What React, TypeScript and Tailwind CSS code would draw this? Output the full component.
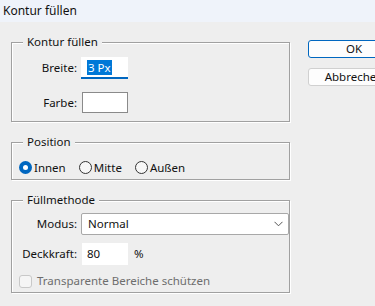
import React from 'react';

const ChevronDown = () => (
  <svg width="9" height="6" viewBox="0 0 9 6" fill="none" stroke="#555" strokeWidth="1">
    <path d="M0.5 0.8 L4.5 4.8 L8.5 0.8" />
  </svg>
);

const Radio = ({ checked, label }: { checked?: boolean; label: string }) => (
  <div className="flex items-center gap-[2px]">
    {checked ? (
      <span className="w-[13px] h-[13px] rounded-full bg-[#0067c0] flex items-center justify-center">
        <span className="w-[5px] h-[5px] rounded-full bg-white" />
      </span>
    ) : (
      <span className="w-[13px] h-[13px] rounded-full border border-[#333] bg-[#f7f7f7]" />
    )}
    <span>{label}</span>
  </div>
);

const Group = ({
  title,
  className,
  children,
}: {
  title: string;
  className: string;
  children?: React.ReactNode;
}) => (
  <div
    className={`border border-[#a0a0a0] shadow-[1px_1px_0_#fff,inset_1px_1px_0_#fff] ${className}`}
  >
    <div className="-mt-[9px] ml-[11px] w-fit px-[4px] bg-[#eeeeee] leading-[16px]">{title}</div>
    {children}
  </div>
);

export default function App() {
  return (
    <div className="w-[375px] h-[306px] overflow-hidden bg-[#eeeeee] text-[11.5px] leading-[16px] text-[#111] font-['Noto_Sans',sans-serif]">
      {/* Title bar */}
      <div className="h-[22px] flex items-center pl-[3px] bg-[#eff3fa] text-[12px]">Kontur füllen</div>

      <div className="flex">
        {/* Left: groups */}
        <div className="ml-[11px] w-[286px] flex flex-col">
          <Group title="Kontur füllen" className="mt-[20px] h-[80px]">
            <div className="flex items-center mt-[7px]">
              <span className="w-[65px] text-right">Breite:</span>
              <div className="ml-[4px] w-[47px] h-[22px] bg-white border-b-2 border-[#0067c0] flex items-center pl-[6px]">
                <span className="bg-[#0078d7] text-white px-[1px] leading-[15px]">3 Px</span>
              </div>
            </div>
            <div className="flex items-center mt-[13px]">
              <span className="w-[65px] text-right">Farbe:</span>
              <div className="ml-[5px] w-[46px] h-[21px] bg-white border border-[#8a8a8a]" />
            </div>
          </Group>

          <Group title="Position" className="mt-[20px] h-[38px]">
            <div className="flex items-center gap-[13px] ml-[7px] mt-[11px] h-[13px]">
              <Radio checked label="Innen" />
              <Radio label="Mitte" />
              <Radio label="Außen" />
            </div>
          </Group>

          <Group title="Füllmethode" className="mt-[20px] h-[93px]">
            <div className="flex items-center mt-[5px]">
              <span className="w-[65px] text-right">Modus:</span>
              <div className="ml-[4px] w-[208px] h-[22px] bg-white border border-[#a8a8a8] rounded-[2px] flex items-center justify-between pl-[6px] pr-[5px]">
                <span>Normal</span>
                <ChevronDown />
              </div>
            </div>
            <div className="flex items-center mt-[8px]">
              <span className="w-[65px] text-right">Deckkraft:</span>
              <div className="ml-[5px] w-[46px] h-[22px] bg-white flex items-center pl-[5px]">80</div>
              <span className="ml-[6px]">%</span>
            </div>
            <div className="flex items-center mt-[8px] ml-[7px]">
              <span className="w-[13px] h-[13px] rounded-[3px] border border-[#c8c8c8] bg-[#f5f5f5]" />
              <span className="ml-[5px] text-[#6d6d6d]">Transparente Bereiche schützen</span>
            </div>
          </Group>
        </div>

        {/* Right: buttons */}
        <div className="ml-[18px] mt-[18px] flex flex-col gap-[10px]">
          <button className="w-[92px] h-[18px] shrink-0 border border-[#0067c0] rounded-[3px] bg-[#fdfdfd] leading-[14px] text-center">
            OK
          </button>
          <button className="w-[92px] h-[18px] shrink-0 border border-[#d0d0d0] rounded-[3px] bg-[#fdfdfd] leading-[14px] text-center">
            Abbrechen
          </button>
        </div>
      </div>
    </div>
  );
}
